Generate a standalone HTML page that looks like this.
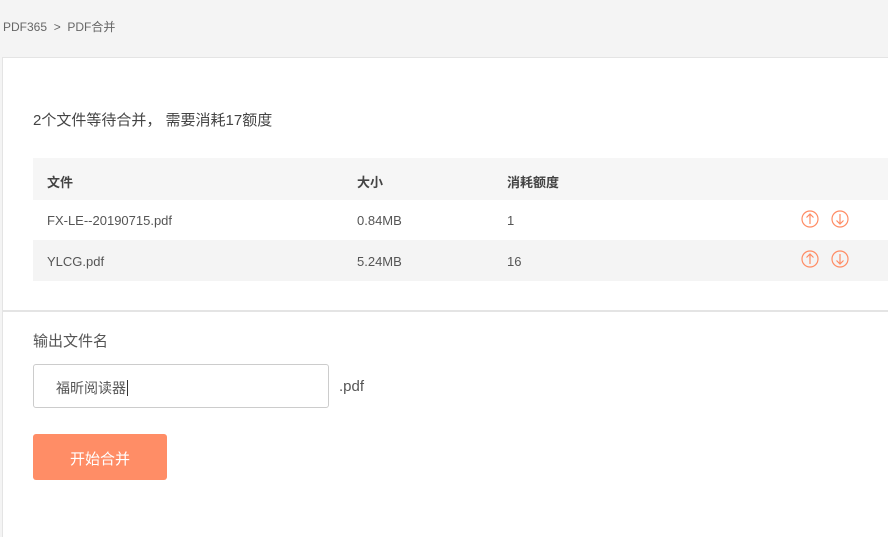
<!DOCTYPE html>
<html><head><meta charset="utf-8"><style>
*{margin:0;padding:0;box-sizing:border-box}
body{width:888px;height:530px;background:#f4f4f4;font-family:"Liberation Sans","Noto Sans CJK SC",sans-serif;color:#555;position:relative;overflow:hidden}
.abs{position:absolute}
.panel{left:2px;top:57px;width:890px;height:480px;background:#fff;border-top:1px solid #e4e4e4;border-left:1px solid #e4e4e4}
.t{font-size:13px;white-space:nowrap}
</style></head><body>
<div class="abs t" style="left:3px;top:18px;font-size:12px;color:#666">PDF365 &nbsp;&gt;&nbsp; PDF合并</div>
<div class="abs panel"></div>
<div class="abs t" style="left:33px;top:109px;font-size:15px;color:#444">2个文件等待合并， 需要消耗17额度</div>
<div class="abs" style="left:33px;top:158px;width:855px;height:42px;background:#f6f6f6"></div>
<div class="abs" style="left:33px;top:240px;width:855px;height:41px;background:#f4f4f4"></div>
<div class="abs t" style="left:47px;top:172px;font-weight:bold;color:#444">文件</div>
<div class="abs t" style="left:357px;top:172px;font-weight:bold;color:#444">大小</div>
<div class="abs t" style="left:507px;top:172px;font-weight:bold;color:#444">消耗额度</div>
<div class="abs t" style="left:47px;top:213px">FX-LE--20190715.pdf</div>
<div class="abs t" style="left:357px;top:213px">0.84MB</div>
<div class="abs t" style="left:507px;top:213px">1</div>
<div class="abs t" style="left:47px;top:254px">YLCG.pdf</div>
<div class="abs t" style="left:357px;top:254px">5.24MB</div>
<div class="abs t" style="left:507px;top:254px">16</div>
<svg class="abs" style="left:800px;top:209px" width="52" height="60" fill="none" stroke="#ff8b63" stroke-width="1.2">
<circle cx="10" cy="10" r="8"/><path d="M10 5v10M6.5 8.5L10 5l3.5 3.5"/>
<circle cx="40" cy="10" r="8"/><path d="M40 5v10M36.5 11.5L40 15l3.5-3.5"/>
<circle cx="10" cy="50" r="8"/><path d="M10 45v10M6.5 48.5L10 45l3.5 3.5"/>
<circle cx="40" cy="50" r="8"/><path d="M40 45v10M36.5 51.5L40 55l3.5-3.5"/>
</svg>
<div class="abs" style="left:3px;top:310px;width:885px;height:2px;background:#e4e4e4"></div>
<div class="abs t" style="left:33px;top:330px;font-size:15px">输出文件名</div>
<div class="abs" style="left:33px;top:364px;width:296px;height:44px;border:1px solid #ccc;border-radius:3px"></div>
<div class="abs t" style="left:56px;top:378px;font-size:14px">福昕阅读器<span style="border-left:1px solid #333;margin-left:1px"></span></div>
<div class="abs t" style="left:339px;top:378px;font-size:15px">.pdf</div>
<div class="abs" style="left:33px;top:434px;width:134px;height:46px;background:#ff8d66;border-radius:3px;color:#fff;font-size:15px;text-align:center;line-height:52px">开始合并</div>
</body></html>
